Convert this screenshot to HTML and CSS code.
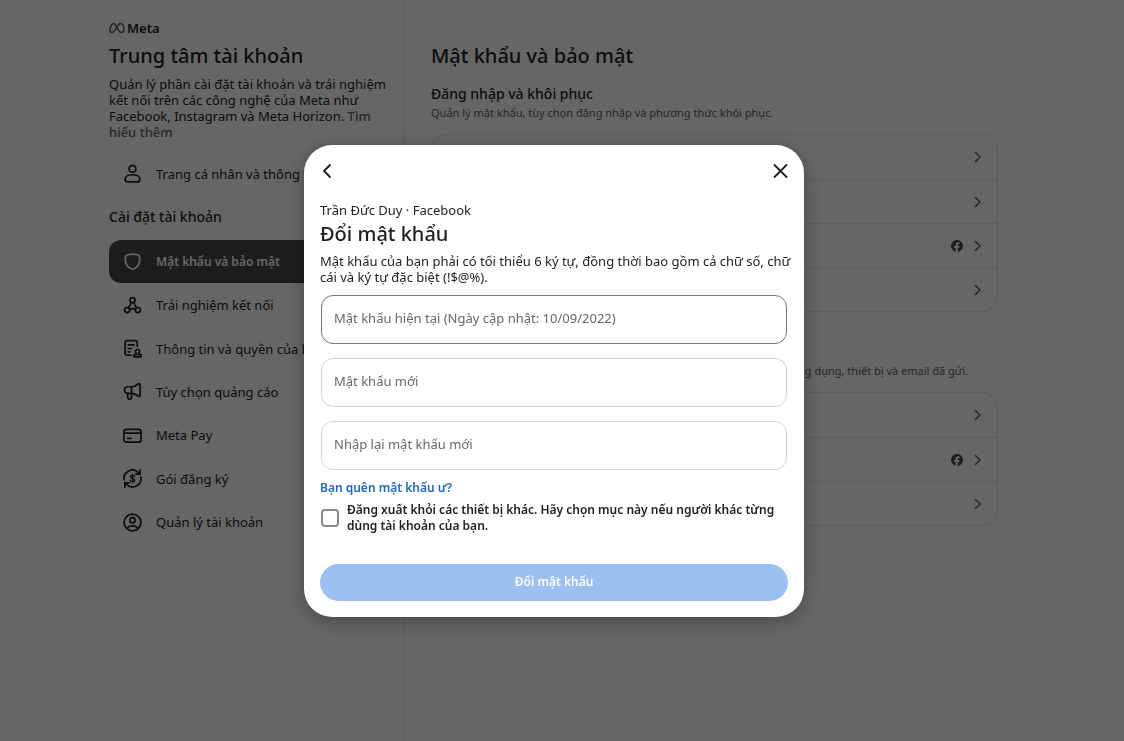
FILE: index.html
```html
<!DOCTYPE html>
<html lang="vi">
<head>
<meta charset="utf-8">
<meta name="viewport" content="width=device-width, initial-scale=1">
<title>Trung tâm tài khoản</title>
<link rel="stylesheet" href="styles.css">
</head>
<body>
<svg class="defs" aria-hidden="true">
  <symbol id="chevron" viewBox="0 0 12 12"><path d="M4.500 1.500L9 6l-4.500 4.500"/></symbol>
  <symbol id="facebook" viewBox="0 0 12 12"><path d="M12 6a6 6 0 1 0-7.4 5.8V7.900H3.200V6h1.400v-.8c0-2 .9-3 2.800-3 .4 0 .9.1 1.200.2V4H7.900c-.9 0-1.200.3-1.200 1.200V6h1.900l-.3 1.900H6.700V12A6 6 0 0 0 12 6z"/></symbol>
</svg>
<div class="page">
  <aside class="sidebar">
    <div class="brand">
      <svg class="brand-mark" viewBox="0 0 16 12" aria-hidden="true"><path d="M1 8.200C1 4.800 2.700 1.500 4.700 1.500 7.200 1.500 9 10.500 12.300 10.500c1.700 0 2.700-1 2.700-2.900C15 4.300 13.300 1.500 11.300 1.500 8.300 1.500 6.700 10.500 3.200 10.500 1.800 10.500 1 9.600 1 8.200z"/></svg>
      <span>Meta</span>
    </div>
    <h1 class="title">Trung tâm tài khoản</h1>
    <p class="intro">Quản lý phần cài đặt tài khoản và trải nghiệm kết nối trên các công nghệ của Meta như Facebook, Instagram và Meta Horizon. <a href="#more">Tìm hiểu thêm</a></p>
    <nav class="nav nav-profile">
      <a class="nav-item" href="#profile">
        <svg class="icon" viewBox="0 0 20 20" aria-hidden="true"><circle cx="10" cy="5" r="3.600"/><path d="M10 11.300c4.600 0 7.800 2 7.800 4.700 0 1.900-1 2.900-2.900 2.900H5.100c-1.900 0-2.900-1-2.900-2.900 0-2.700 3.200-4.700 7.800-4.700z"/></svg>
        <span>Trang cá nhân và thông tin</span>
      </a>
    </nav>
    <h2 class="nav-heading">Cài đặt tài khoản</h2>
    <nav class="nav nav-settings">
      <a class="nav-item is-active" href="#security" aria-current="page">
        <svg class="icon" viewBox="0 0 20 20" aria-hidden="true"><path d="M2.500 5.300C2.500 3.500 6 2.300 10 2.300s7.500 1.200 7.500 3v3.200c0 4.200-2.500 7.500-6 9.200a3.200 3.200 0 0 1-3 0c-3.500-1.700-6-5-6-9.200z"/></svg>
        <span>Mật khẩu và bảo mật</span>
      </a>
      <a class="nav-item" href="#connected">
        <svg class="icon" viewBox="0 0 20 20" aria-hidden="true"><circle cx="10" cy="4.500" r="2.700"/><circle cx="4.300" cy="14.800" r="2.700"/><circle cx="15.700" cy="14.800" r="2.700"/><path d="M8.500 7c-.4 2-1.500 3.800-2.800 5.200M11.500 7c.4 2 1.500 3.800 2.800 5.200M7 14c2-.8 4-.8 6 0"/></svg>
        <span>Trải nghiệm kết nối</span>
      </a>
      <a class="nav-item" href="#permissions">
        <svg class="icon" viewBox="0 0 20 20" aria-hidden="true"><path d="M8.500 17H4.500c-1.300 0-2.300-.9-2.300-2.200V4c0-1.300 1-2.200 2.300-2.200h8.200C14 1.800 15 2.700 15 4v3.500M5.500 6.200h6M5.500 10h3.500M5.500 13.500h1.500"/><path d="M11.500 18.800v-2.500H19v2.500zM13.700 16.300v-1.600a2.200 2.200 0 1 1 3.100 0v1.600"/></svg>
        <span>Thông tin và quyền của bạn</span>
      </a>
      <a class="nav-item" href="#ads">
        <svg class="icon" viewBox="0 0 20 20" aria-hidden="true"><path d="M9 5H5a3.500 3.500 0 0 0 0 7h4c3 0 5.200 1.300 7 2.900.8.700 2 .3 2-.9V3c0-1.200-1.200-1.600-2-.9C14.200 3.700 12 5 9 5zM9 5v7M4.500 12l.8 5c.3 2 3.700 1.800 3.700-.3V12"/></svg>
        <span>Tùy chọn quảng cáo</span>
      </a>
      <a class="nav-item" href="#pay">
        <svg class="icon" viewBox="0 0 20 20" aria-hidden="true"><rect x="1" y="3.500" width="18" height="13.500" rx="2.500"/><path d="M1 7.500h18M5 13h3.500"/></svg>
        <span>Meta Pay</span>
      </a>
      <a class="nav-item" href="#subscriptions">
        <svg class="icon" viewBox="0 0 20 20" aria-hidden="true"><path d="M1.200 11.500A8.900 8.900 0 0 1 16.500 4M18 1v4.500h-4.500M18.800 8.500A8.900 8.900 0 0 1 3.500 16M2 19v-4.500h4.500"/><path class="thin" d="M12.300 7.900C11.800 7 11 6.700 10 6.700c-1.300 0-2.200.6-2.200 1.600 0 2.300 4.500 1.100 4.500 3.400 0 1-.9 1.700-2.300 1.700-1.200 0-2-.4-2.500-1.300M10 5.400v9.300"/></svg>
        <span>Gói đăng ký</span>
      </a>
      <a class="nav-item" href="#ownership">
        <svg class="icon" viewBox="0 0 20 20" aria-hidden="true"><circle cx="10" cy="10" r="8.900"/><circle cx="10" cy="7.700" r="2.800"/><path d="M4.200 16.300c1.300-1.800 3.200-2.700 5.800-2.700s4.500.9 5.800 2.700"/></svg>
        <span>Quản lý tài khoản</span>
      </a>
    </nav>
  </aside>
  <main class="content">
    <h2 class="content-title">Mật khẩu và bảo mật</h2>
    <section class="group">
      <h3 class="group-title">Đăng nhập và khôi phục</h3>
      <p class="group-text">Quản lý mật khẩu, tùy chọn đăng nhập và phương thức khôi phục.</p>
      <div class="card">
        <a class="row" href="#password" aria-label="Đổi mật khẩu"><svg class="chevron"><use href="#chevron"/></svg></a>
        <a class="row" href="#two-factor" aria-label="Xác thực 2 yếu tố"><svg class="chevron"><use href="#chevron"/></svg></a>
        <a class="row" href="#saved-login" aria-label="Đăng nhập đã lưu"><svg class="facebook"><use href="#facebook"/></svg><svg class="chevron"><use href="#chevron"/></svg></a>
        <a class="row" href="#passkey" aria-label="Mã khóa"><svg class="chevron"><use href="#chevron"/></svg></a>
      </div>
    </section>
    <section class="group">
      <h3 class="group-title">Kiểm tra bảo mật</h3>
      <p class="group-text">Xem lại vấn đề về bảo mật bằng cách chạy quy trình kiểm tra trên các ứng dụng, thiết bị và email đã gửi.</p>
      <div class="card">
        <a class="row" href="#where" aria-label="Nơi bạn đăng nhập"><svg class="chevron"><use href="#chevron"/></svg></a>
        <a class="row" href="#emails" aria-label="Email gần đây"><svg class="facebook"><use href="#facebook"/></svg><svg class="chevron"><use href="#chevron"/></svg></a>
        <a class="row" href="#checkup" aria-label="Kiểm tra bảo mật"><svg class="chevron"><use href="#chevron"/></svg></a>
      </div>
    </section>
  </main>
</div>
<div class="overlay">
  <form class="dialog" role="dialog" aria-modal="true" aria-labelledby="dialog-title">
    <header class="dialog-bar">
      <button class="icon-button" type="button" aria-label="Quay lại"><svg viewBox="0 0 16 16"><path d="M10 2L4 8l6 6"/></svg></button>
      <button class="icon-button" type="button" aria-label="Đóng"><svg viewBox="0 0 16 16"><path d="M2.500 2l12 12M14.500 2l-12 12"/></svg></button>
    </header>
    <p class="account">Trần Đức Duy · Facebook</p>
    <h2 class="dialog-title" id="dialog-title">Đổi mật khẩu</h2>
    <p class="hint">Mật khẩu của bạn phải có tối thiểu 6 ký tự, đồng thời bao gồm cả chữ số, chữ cái và ký tự đặc biệt (!$@%).</p>
    <div class="fields">
      <input class="field is-current" type="password" aria-label="Mật khẩu hiện tại" placeholder="Mật khẩu hiện tại (Ngày cập nhật: 10/09/2022)">
      <input class="field" type="password" aria-label="Mật khẩu mới" placeholder="Mật khẩu mới">
      <input class="field" type="password" aria-label="Nhập lại mật khẩu mới" placeholder="Nhập lại mật khẩu mới">
    </div>
    <a class="forgot" href="#forgot">Bạn quên mật khẩu ư?</a>
    <div class="logout">
      <input class="check" type="checkbox" id="logout">
      <label for="logout">Đăng xuất khỏi các thiết bị khác. Hãy chọn mục này nếu người khác từng dùng tài khoản của bạn.</label>
    </div>
    <button class="submit" type="submit">Đổi mật khẩu</button>
  </form>
</div>
</body>
</html>
```
FILE: styles.css
```css
* { box-sizing: border-box; }
body {
  margin: 0;
  background: #fff;
  color: #1c1e21;
  font-family: "Noto Sans", "Open Sans", sans-serif;
  font-size: 13px;
  line-height: 16px;
}
h1, h2, h3, p { margin: 0; }
a { color: inherit; text-decoration: none; }
svg { fill: none; stroke: currentColor; stroke-linecap: round; stroke-linejoin: round; }
.defs { position: absolute; width: 0; height: 0; }

.page { display: flex; min-height: 100vh; padding: 0 126px 0 109px; }
.sidebar { flex: 0 0 295px; padding: 20px 24px 0 0; border-right: 1px solid #e4e6e8; }
.brand { display: flex; align-items: center; gap: 2px; font-size: 13px; font-weight: 600; }
.brand-mark { width: 16px; height: 12px; color: #606468; stroke-width: 1.6; }
.title { margin-top: 4px; font-size: 20px; line-height: 32px; font-weight: 500; }
.intro { margin: 4px -8px 0 0; }
.intro a { color: #606468; font-weight: 500; }
.nav-item { display: flex; align-items: center; gap: 14px; padding: 0 14px; border-radius: 12px; white-space: nowrap; }
.icon { flex: none; width: 19px; height: 19px; stroke-width: 1.8; }
.icon .thin { stroke-width: 1.4; }
.nav-profile { display: grid; height: 43px; margin-top: 12px; }
.nav-heading { margin: 14px 0 15px; font-size: 14px; line-height: 16px; font-weight: 500; }
.nav-settings { display: grid; grid-auto-rows: 1fr; min-height: 304px; }
.is-active { background: #464748; color: #fff; font-size: 12px; font-weight: 600; }

.content { flex: 1; min-width: 0; padding: 40px 0 40px 27px; }
.content-title { font-size: 20px; line-height: 32px; font-weight: 500; }
.group { margin-top: 12px; }
.group + .group { margin-top: 30px; }
.group-title { font-size: 14px; line-height: 20px; font-weight: 500; }
.group-text { margin-top: 1px; color: #5d6368; font-size: 11px; line-height: 16px; white-space: nowrap; }
.card { margin-top: 13px; border: 1px solid #e4e6e8; border-radius: 16px; }
.row { display: flex; align-items: center; justify-content: flex-end; gap: 8px; height: 44px; padding: 0 14px; color: #5d6368; }
.row + .row { border-top: 1px solid #e4e6e8; }
.chevron { width: 12px; height: 12px; stroke-width: 1.5; }
.facebook { width: 12px; height: 12px; fill: #4b4c4f; stroke: none; }

.overlay {
  position: fixed;
  inset: 0;
  display: flex;
  align-items: center;
  justify-content: center;
  padding: 20px 16px 0 0;
  background: rgba(0, 0, 0, 0.6);
}
.dialog {
  display: flex;
  flex-direction: column;
  width: 500px;
  padding: 16px;
  border-radius: 28px;
  background: #fff;
  box-shadow: 0 4px 20px rgba(0, 0, 0, 0.3);
}
.dialog-bar { display: flex; justify-content: space-between; margin-bottom: 21px; }
.icon-button { display: flex; padding: 2px 0; border: 0; background: none; color: #1c1e21; }
.icon-button svg { width: 16px; height: 16px; stroke-width: 1.8; }
.dialog-title { margin-top: 2px; font-size: 20px; line-height: 28px; font-weight: 500; }
.hint { margin: 5px -8px 0 0; }
.fields { display: grid; gap: 14px; margin: 10px 0; padding: 0 1px; }
.field {
  width: 100%;
  height: 49px;
  padding: 0 12px 2px;
  border: 1px solid #d3d6d9;
  border-radius: 12px;
  background: #fff;
  color: #1c1e21;
  font: inherit;
}
.field::placeholder { color: #65686c; opacity: 1; }
.is-current { border-color: #777; }
.forgot { align-self: flex-start; color: #1e66c8; font-size: 12px; font-weight: 600; }
.logout { display: flex; align-items: center; gap: 8px; margin-top: 6px; font-size: 12px; font-weight: 600; }
.check { flex: none; appearance: none; width: 18px; height: 18px; margin: 0 0 0 1px; border: 2px solid #8a8a8a; border-radius: 4px; }
.submit { height: 37px; margin-top: 30px; border: 0; border-radius: 19px; background: #9bc1f2; color: #fff; font: inherit; font-size: 12px; font-weight: 600; }
```
